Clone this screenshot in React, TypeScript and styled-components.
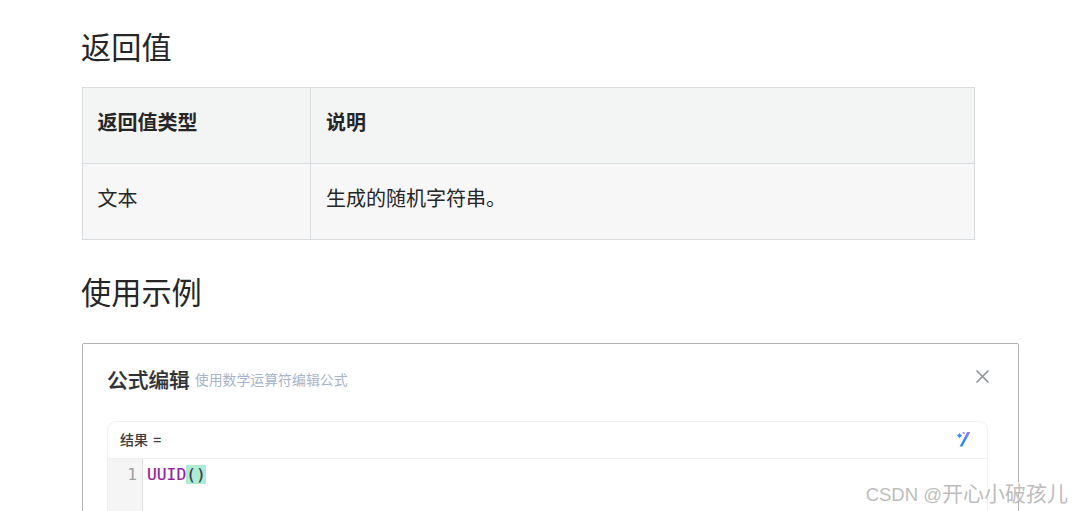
import React from 'react';
import styled, { createGlobalStyle } from 'styled-components';

const GlobalStyle = createGlobalStyle`
  * {
    box-sizing: border-box;
  }

  body {
    margin: 0;
    overflow: hidden;
    background: #ffffff;
    color: #262626;
    font-family: 'Noto Sans CJK SC', sans-serif;
  }
`;

const Page = styled.main`
  position: relative;
  height: 511px;
  padding: 23px 53px 0 82px;
  overflow: hidden;
`;

const Heading = styled.h2`
  margin: 0 0 0 -1px;
  height: 46px;
  font-size: 30.2px;
  font-weight: 400;
  line-height: 46px;
`;

const Table = styled.table`
  width: 893px;
  margin: 18px 0 28px;
  border-collapse: collapse;
  table-layout: fixed;
`;

const Cell = styled.td<{ width?: number }>`
  ${(props) => (props.width ? `width: ${props.width}px;` : '')}
  height: 76px;
  padding: 19px 15px 0;
  border: 1px solid #d9dcdf;
  background: #f7f7f7;
  font-size: 20px;
  line-height: 30px;
  text-align: left;
  vertical-align: top;

  &:first-child {
    padding-left: 14.5px;
  }
`;

const HeadCell = styled(Cell)`
  background: #f3f5f4;
  font-weight: 700;
`;

const Panel = styled.section`
  width: 937px;
  height: 220px;
  margin-top: 29px;
  padding: 0 30px 0 24px;
  border: 1px solid #b3b3b3;
  border-radius: 2px;
`;

const PanelHeader = styled.header`
  display: flex;
  align-items: center;
  height: 77px;
  padding-bottom: 7px;
`;

const PanelTitle = styled.h3`
  margin: 0;
  color: #303133;
  font-size: 20.7px;
  font-weight: 500;
  line-height: 30px;
  -webkit-text-stroke: 0.2px currentColor;
`;

const PanelHint = styled.span`
  margin-left: 5px;
  color: #a6b3c9;
  font-size: 13.9px;
  line-height: 20px;
`;

const CloseIcon = styled.svg`
  width: 15px;
  height: 15px;
  margin: -5px -2px 0 auto;
  stroke: #90959b;
  stroke-width: 1.7;
`;

const Editor = styled.div`
  width: 881px;
  height: 150px;
  border: 1.5px solid #efefef;
  border-radius: 9px;
  overflow: hidden;
`;

const EditorBar = styled.div`
  display: flex;
  align-items: center;
  justify-content: space-between;
  height: 37px;
  padding: 0 16px 2px 12px;
  border-bottom: 1.5px solid #efefef;
  color: #3c3c3c;
  font-size: 14px;
  font-weight: 500;
  word-spacing: 2px;
`;

const WandIcon = styled.svg`
  width: 14px;
  height: 16px;
`;

const EditorBody = styled.div`
  display: flex;
  height: 112px;
  font-family: 'DejaVu Sans Mono', monospace;
  font-size: 16.3px;
  line-height: 19px;
`;

const Gutter = styled.div`
  width: 35px;
  padding: 6px 5px 0 0;
  border-right: 1px solid #dddddd;
  background: #f5f5f5;
  color: #a0a0a0;
  text-align: right;
`;

const CodeLine = styled.code`
  padding: 6px 0 0 4px;
  color: #91219b;
  font-family: inherit;
  -webkit-text-stroke: 0.2px currentColor;
`;

const Bracket = styled.span`
  display: inline-block;
  height: 19px;
  background: #afead7;
  color: #343b38;
`;

const Watermark = styled.div`
  position: absolute;
  right: 4px;
  bottom: 1px;
  color: #bdbdbd;
  font-family: 'Liberation Sans', 'Noto Sans CJK SC', sans-serif;
  font-size: 18.5px;
  line-height: 30px;
  text-shadow: -1px -1px 0 #ffffff;
  white-space: nowrap;
`;

const WatermarkName = styled.span`
  font-size: 21px;
`;

const App: React.FC = () => (
  <>
    <GlobalStyle />
    <Page>
      <Heading>返回值</Heading>
      <Table>
        <thead>
          <tr>
            <HeadCell as="th" width={228}>
              返回值类型
            </HeadCell>
            <HeadCell as="th">说明</HeadCell>
          </tr>
        </thead>
        <tbody>
          <tr>
            <Cell>文本</Cell>
            <Cell>生成的随机字符串。</Cell>
          </tr>
        </tbody>
      </Table>
      <Heading>使用示例</Heading>
      <Panel>
        <PanelHeader>
          <PanelTitle>公式编辑</PanelTitle>
          <PanelHint>使用数学运算符编辑公式</PanelHint>
          <CloseIcon viewBox="0 0 15 15">
            <path d="M1.5 1.5l12 12M13.5 1.5l-12 12" />
          </CloseIcon>
        </PanelHeader>
        <Editor>
          <EditorBar>
            <span>结果 =</span>
            <WandIcon viewBox="0 0 14 16">
              <defs>
                <linearGradient id="wand" x1="0" y1="1" x2="1" y2="0">
                  <stop offset="0" stopColor="#278aff" />
                  <stop offset="0.55" stopColor="#4d83f5" />
                  <stop offset="1" stopColor="#a67bea" />
                </linearGradient>
              </defs>
              <path d="M10.2 1h3.2L5.4 15.5H2.6z" fill="url(#wand)" />
              <path d="M2.5 2.1l1.2 1.4 1.4 1.1-1.4 1.2-1.2 1.4-1.2-1.4L0 4.6l1.3-1.1z" fill="#398cff" />
              <circle cx="6.7" cy="2" r="1.1" fill="#a37aed" />
            </WandIcon>
          </EditorBar>
          <EditorBody>
            <Gutter>1</Gutter>
            <CodeLine>
              UUID<Bracket>()</Bracket>
            </CodeLine>
          </EditorBody>
        </Editor>
      </Panel>
      <Watermark>
        CSDN @<WatermarkName>开心小破孩儿</WatermarkName>
      </Watermark>
    </Page>
  </>
);

export default App;
